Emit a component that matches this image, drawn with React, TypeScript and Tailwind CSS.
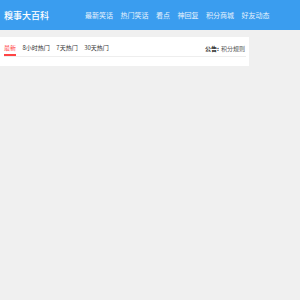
export default function App() {
  const nav = ["最新笑话", "热门笑话", "看点", "神回复", "积分商城", "好友动态"];
  return (
    <div className="w-[300px] h-[300px] bg-[#f0f0f0]" style={{ fontFamily: '"Noto Sans CJK SC", "Noto Sans", sans-serif' }}>
      <div className="h-[30px] bg-[#3a9def] flex items-center">
        <div className="pl-[4px] text-[9px] font-medium text-white leading-none pt-[1px]">糗事大百科</div>
        <div className="ml-[36px] flex items-center gap-[7.5px] text-[7px] text-[#e6f2fd] leading-none">
          {nav.map((n) => (
            <span key={n}>{n}</span>
          ))}
        </div>
      </div>
      <div className="mt-[7px] w-[249px] h-[29px] bg-white pt-[5px] pl-[4px] pr-[3px]">
        <div className="flex justify-between border-b border-[#eeeeee] h-[15px]">
          <div className="flex gap-[6.5px] text-[6px] leading-none">
            <span className="text-[#f44] border-b-2 border-[#f44] h-[14px] pt-[3px]">最新</span>
            <span className="text-[#333] pt-[3px]">8小时热门</span>
            <span className="text-[#333] pt-[3px]">7天热门</span>
            <span className="text-[#333] pt-[3px]">30天热门</span>
          </div>
          <div className="text-[6px] leading-none pt-[4px] pr-[1px]">
            <span className="text-[#333] font-bold">公告:</span>
            <span className="text-[#555] ml-[2px]">积分规则</span>
          </div>
        </div>
      </div>
    </div>
  );
}
